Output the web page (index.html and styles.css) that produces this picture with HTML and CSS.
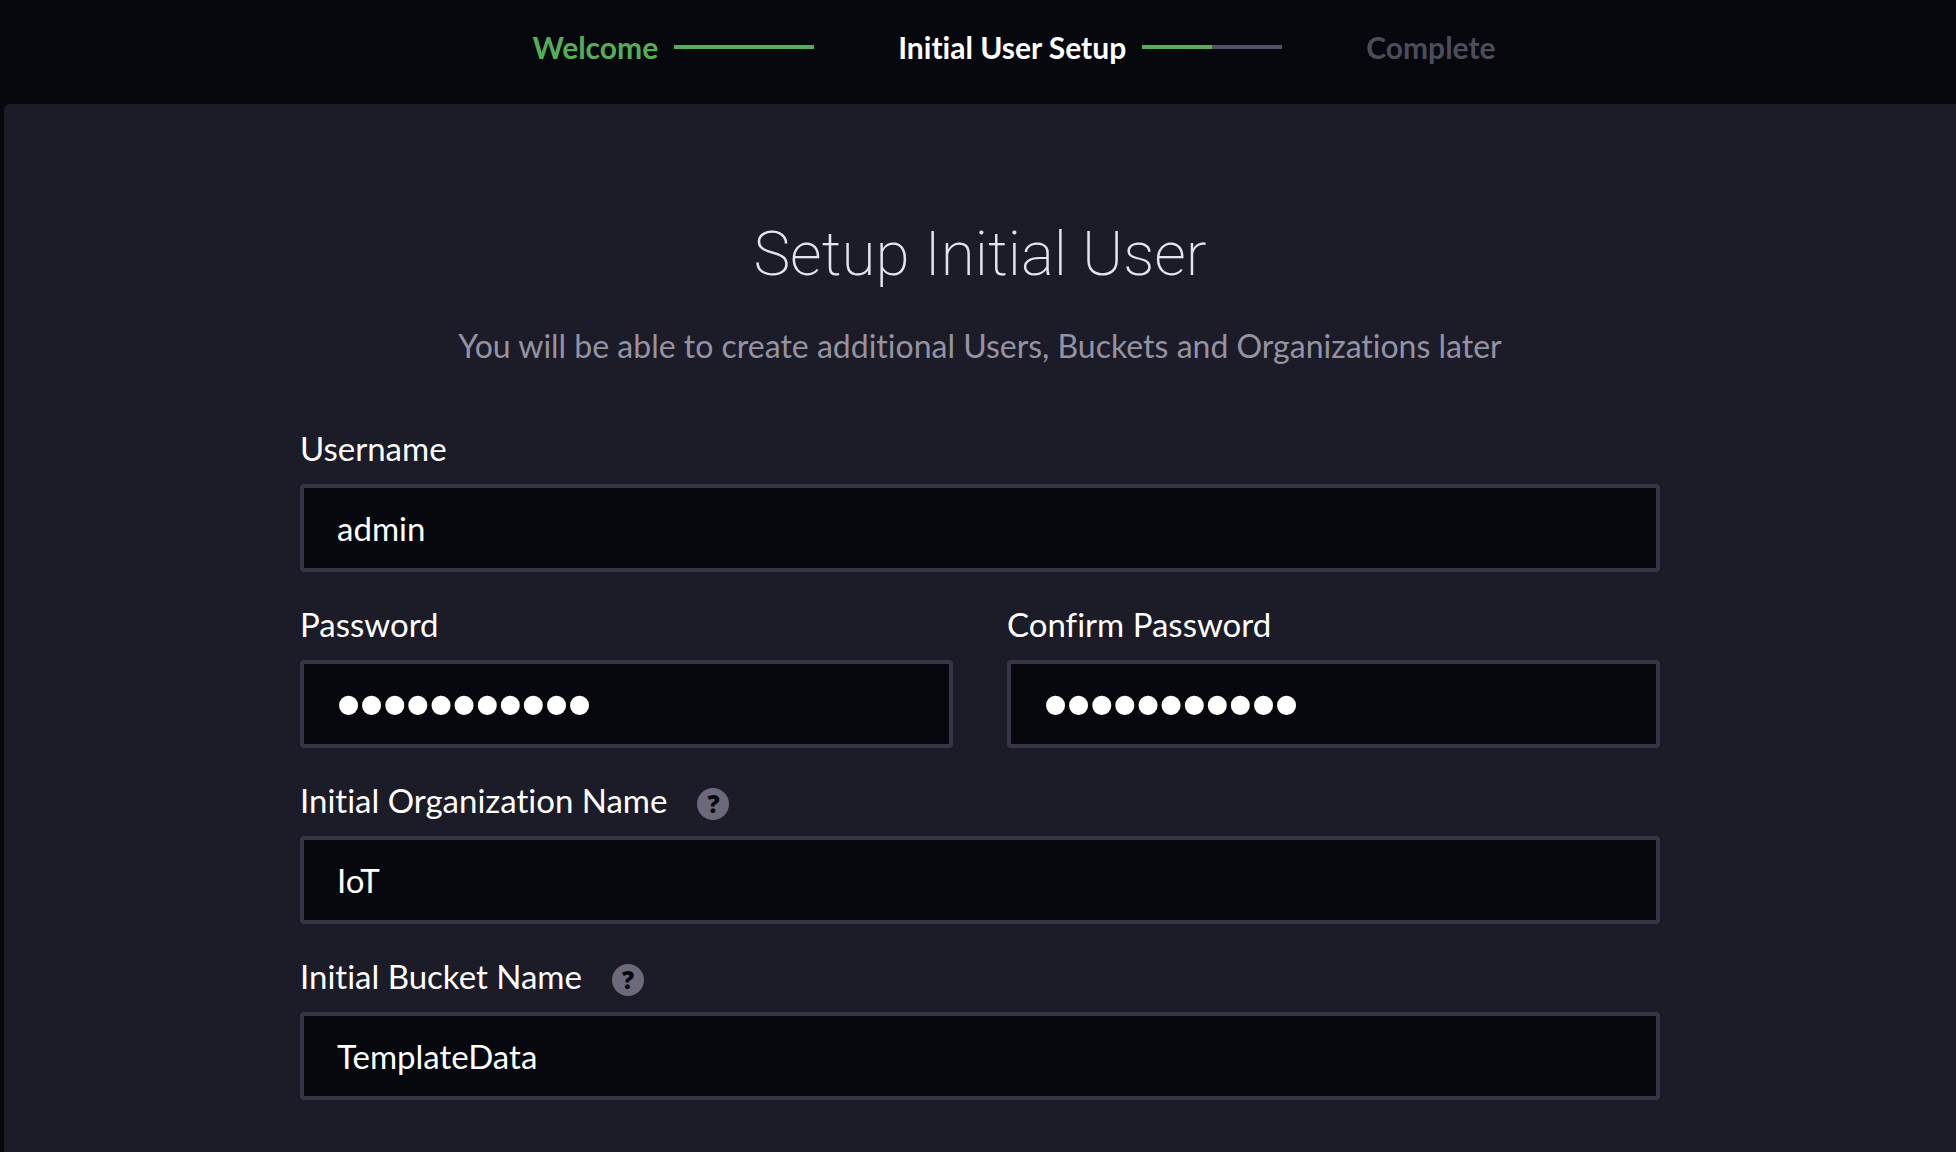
FILE: index.html
```html
<!DOCTYPE html>
<html lang="en">
<head>
<meta charset="utf-8">
<meta name="viewport" content="width=device-width, initial-scale=1">
<title>Setup Initial User</title>
<link rel="stylesheet" href="styles.css">
</head>
<body>
<header class="wizard-header">
  <ol class="steps">
    <li class="step step-done">Welcome<span class="connector connector-full"></span></li>
    <li class="step step-current" aria-current="step">Initial User Setup<span class="connector connector-half"></span></li>
    <li class="step step-next">Complete</li>
  </ol>
</header>
<main class="panel">
  <form class="setup-form">
    <h1 class="title">Setup Initial User</h1>
    <p class="subtitle">You will be able to create additional Users, Buckets and Organizations later</p>
    <div class="fields">
      <div class="field field-wide">
        <div class="label-row"><label for="username">Username</label></div>
        <input class="input" id="username" type="text" value="admin">
      </div>
      <div class="field">
        <div class="label-row"><label for="password">Password</label></div>
        <input class="input input-password" id="password" type="password" value="adminadmin1">
      </div>
      <div class="field">
        <div class="label-row"><label for="confirm">Confirm Password</label></div>
        <input class="input input-password" id="confirm" type="password" value="adminadmin1">
      </div>
      <div class="field field-wide">
        <div class="label-row"><label for="org">Initial Organization Name</label><button class="help" type="button">?</button></div>
        <input class="input" id="org" type="text" value="IoT">
      </div>
      <div class="field field-wide">
        <div class="label-row"><label for="bucket">Initial Bucket Name</label><button class="help" type="button">?</button></div>
        <input class="input" id="bucket" type="text" value="TemplateData">
      </div>
    </div>
  </form>
</main>
</body>
</html>
```
FILE: styles.css
```css
* {
  box-sizing: border-box;
}

body {
  display: flex;
  flex-direction: column;
  min-height: 100vh;
  margin: 0;
  background: #07080d;
  color: #fff;
  font-family: Lato, sans-serif;
  font-size: 33px;
  line-height: 40px;
  font-variant-ligatures: none;
}

.wizard-header {
  padding: 29px 0 39px 72px;
}

.steps {
  display: flex;
  justify-content: center;
  gap: 84px;
  margin: 0;
  padding: 0;
  list-style: none;
  font-size: 30px;
  font-weight: 700;
  line-height: 36px;
}

.step {
  display: flex;
  align-items: center;
  gap: 16px;
  white-space: nowrap;
}

.step-done {
  color: #56ad57;
}

.step-next {
  color: #4b4d5b;
}

.connector {
  width: 140px;
  height: 4px;
}

.connector-full {
  background: #56ad57;
}

.connector-half {
  background: linear-gradient(to right, #56ad57 50%, #515264 50%);
}

.panel {
  flex: 1;
  margin-left: 4px;
  padding: 114px 32px 52px;
  border-top-left-radius: 6px;
  background: #1c1b28;
}

.setup-form {
  max-width: 1360px;
  margin: 0 auto;
}

.title {
  margin: 0 0 36px;
  font-family: Roboto, sans-serif;
  font-size: 62px;
  font-weight: 200;
  line-height: 72px;
  color: #e4e4ec;
  text-align: center;
}

.subtitle {
  margin: 0 0 62px;
  color: #9593a3;
  font-size: 32px;
  text-align: center;
}

.fields {
  display: grid;
  grid-template-columns: 1fr 1fr;
  gap: 32px 54px;
}

.field {
  display: flex;
  flex-direction: column;
  gap: 16px;
  min-width: 0;
}

.field-wide {
  grid-column: 1 / -1;
}

.label-row {
  display: flex;
  align-items: flex-end;
  gap: 30px;
}

.help {
  width: 32px;
  height: 32px;
  padding: 0;
  border: 0;
  border-radius: 50%;
  background: #6b697a;
  color: #07080d;
  font: 800 24px/32px "Open Sans", sans-serif;
}

.input {
  width: 100%;
  height: 88px;
  padding: 0 33px;
  border: 4px solid #363446;
  border-radius: 4px;
  background: #07080d;
  color: #fff;
  font: inherit;
}

.input-password {
  font-family: "Liberation Sans", sans-serif;
  font-size: 66px;
  font-weight: 700;
}
```
